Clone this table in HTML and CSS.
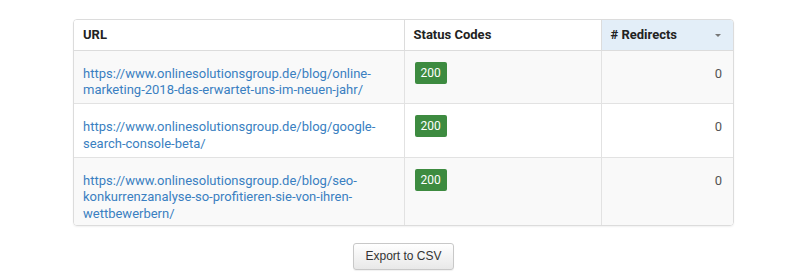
FILE: index.html
```html
<!DOCTYPE html>
<html>
<head>
<meta charset="utf-8">
<link rel="stylesheet" href="styles.css">
</head>
<body>
<div class="page">
  <div class="table-wrap">
    <table class="grid">
      <colgroup>
        <col class="c-url"><col class="c-status"><col class="c-redir">
      </colgroup>
      <thead>
        <tr>
          <th>URL</th>
          <th>Status Codes</th>
          <th class="sorted"><span>#&nbsp;Redirects</span><span class="caret"></span></th>
        </tr>
      </thead>
      <tbody>
        <tr class="odd">
          <td><a href="#">https://www.onlinesolutionsgroup.de/blog/online-marketing-2018-das-erwartet-uns-im-neuen-jahr/</a></td>
          <td><span class="badge">200</span></td>
          <td class="num">0</td>
        </tr>
        <tr>
          <td><a href="#">https://www.onlinesolutionsgroup.de/blog/google-search-console-beta/</a></td>
          <td><span class="badge">200</span></td>
          <td class="num">0</td>
        </tr>
        <tr class="odd">
          <td><a href="#">https://www.onlinesolutionsgroup.de/blog/seo-konkurrenzanalyse-so-profitieren-sie-von-ihren-wettbewerbern/</a></td>
          <td><span class="badge">200</span></td>
          <td class="num">0</td>
        </tr>
      </tbody>
    </table>
  </div>
  <div class="actions">
    <button class="btn">Export to CSV</button>
  </div>
</div>
</body>
</html>
```
FILE: styles.css
```css
html, body {
  margin: 0;
  padding: 0;
  background: #ffffff;
}
.page {
  width: 800px;
  height: 276px;
  padding-top: 19px;
  box-sizing: border-box;
  font-family: Roboto, "Liberation Sans", Arial, sans-serif;
}
.table-wrap {
  margin-left: 73px;
  width: 661px;
  border: 1px solid #dcdcdc;
  border-radius: 4px;
  box-shadow: 0 1px 2px rgba(0,0,0,0.06);
  overflow: hidden;
  box-sizing: border-box;
}
.grid {
  width: 100%;
  border-collapse: collapse;
  table-layout: fixed;
  font-size: 13px;
}
.c-url { width: 330px; }
.c-status { width: 197px; }
.c-redir { width: auto; }
.grid th {
  text-align: left;
  font-weight: 700;
  color: #222;
  height: 30px;
  padding: 0 9px;
  border-bottom: 1px solid #dcdcdc;
  border-left: 1px solid #dcdcdc;
  background: #fff;
  box-sizing: border-box;
}
.grid th:first-child, .grid td:first-child { border-left: none; }
.grid th.sorted {
  background: #e3eef8;
  position: relative;
}
.caret {
  position: absolute;
  right: 12px;
  top: 14px;
  width: 0;
  height: 0;
  border-left: 3px solid transparent;
  border-right: 3px solid transparent;
  border-top: 3px solid #777;
}
.grid tbody tr {
  height: 53.5px;
}
.grid td {
  vertical-align: top;
  padding: 15px 9px 2px 9px;
  line-height: 16.7px;
  border-left: 1px solid #e2e2e2;
  border-top: 1px solid #e2e2e2;
  color: #555;
}
.grid tbody tr:first-child td { border-top: none; }
.grid tr.odd td { background: #f9f9f9; }
.grid a {
  color: #3a7fc1;
  text-decoration: none;
}
.badge {
  display: inline-block;
  background: #3d8b40;
  color: #fff;
  font-size: 12px;
  line-height: 22px;
  height: 22px;
  padding: 0 6px;
  border-radius: 2px;
  vertical-align: top;
  margin-top: -4px;
  margin-left: 1px;
}
.grid td.num {
  text-align: right;
  padding-right: 11px;
}
.actions {
  display: flex;
  justify-content: center;
  padding-top: 17px;
  padding-left: 7px;
}
.btn {
  font-family: "Liberation Sans", Arial, sans-serif;
  font-size: 12px;
  color: #333;
  height: 27px;
  width: 101px;
  padding: 0;
  border: 1px solid #c8c8c8;
  border-radius: 3px;
  background: linear-gradient(#ffffff, #e8e8e8);
  box-shadow: 0 1px 1px rgba(0,0,0,0.06);
}
```
